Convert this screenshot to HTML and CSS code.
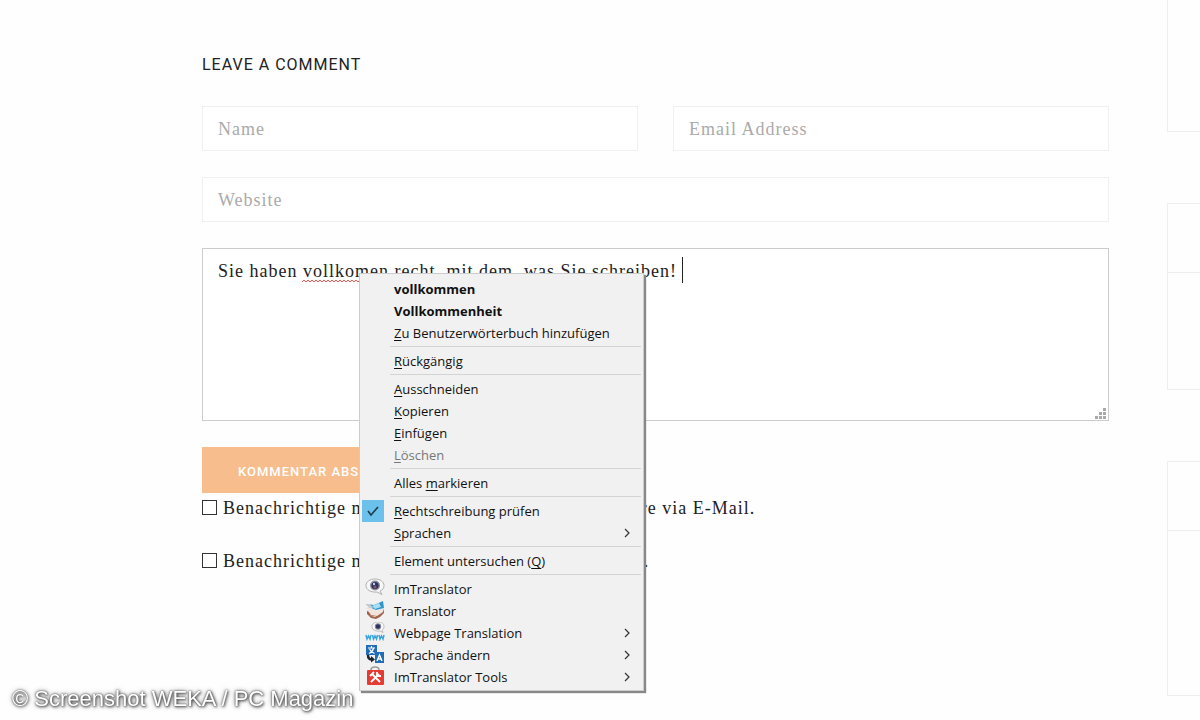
FILE: index.html
```
<!DOCTYPE html>
<html lang="de">
<head>
  <meta charset="UTF-8" />
  <meta name="viewport" content="width=device-width, initial-scale=1.0" />
  <title>Leave a comment</title>
  <link rel="stylesheet" href="styles.css">
</head>
<body>
  <div class="page">
    <main class="comments">
      <h3 class="comments-title">Leave a comment</h3>

      <form class="comment-form">
        <div class="field-row">
          <input class="field" type="text" name="author" placeholder="Name" aria-label="Name">
          <input class="field" type="email" name="email" placeholder="Email Address" aria-label="Email Address">
        </div>
        <input class="field" type="url" name="url" placeholder="Website" aria-label="Website">

        <div class="message">
          <textarea class="field message-text" name="comment" aria-label="Kommentar" spellcheck="false">Sie haben vollkomen recht, mit dem, was Sie schreiben!</textarea>
          <svg class="spelling" viewBox="0 0 84 4" aria-hidden="true">
            <path d="M0 3l2-2 2 2 2-2 2 2 2-2 2 2 2-2 2 2 2-2 2 2 2-2 2 2 2-2 2 2 2-2 2 2 2-2 2 2 2-2 2 2 2-2 2 2 2-2 2 2 2-2 2 2 2-2 2 2 2-2 2 2 2-2 2 2 2-2 2 2 2-2 2 2 2-2 2 2 2-2 2 2 2-2 2 2" fill="none" stroke="#ea5a50"/>
          </svg>
          <span class="caret"></span>
          <svg class="grip" viewBox="0 0 11 11" aria-hidden="true">
            <path d="M8 0h3v3h-3zM4 4h3v3h-3zM8 4h3v3h-3zM0 8h3v3h-3zM4 8h3v3h-3zM8 8h3v3h-3z" fill="#aaa"/>
          </svg>
        </div>

        <button class="submit" type="submit">Kommentar abschicken</button>

        <div class="subscribe">
          <label><input type="checkbox" name="subscribe_comments"> Benachrichtige mich über nachfolgende Kommentare via E-Mail.</label>
          <label><input type="checkbox" name="subscribe_blog"> Benachrichtige mich über neue Beiträge via E-Mail.</label>
        </div>
      </form>

      <!-- context menu -->
      <div class="menu" role="menu">
        <button class="item bold" role="menuitem">vollkommen</button>
        <button class="item bold" role="menuitem">Vollkommenheit</button>
        <button class="item" role="menuitem"><span><u>Z</u>u Benutzerwörterbuch hinzufügen</span></button>
        <hr>
        <button class="item" role="menuitem"><span><u>R</u>ückgängig</span></button>
        <hr>
        <button class="item" role="menuitem"><span><u>A</u>usschneiden</span></button>
        <button class="item" role="menuitem"><span><u>K</u>opieren</span></button>
        <button class="item" role="menuitem"><span><u>E</u>infügen</span></button>
        <button class="item" role="menuitem" disabled><span><u>L</u>öschen</span></button>
        <hr>
        <button class="item" role="menuitem"><span>Alles <u>m</u>arkieren</span></button>
        <hr>
        <button class="item" role="menuitemcheckbox" aria-checked="true">
          <svg class="check" viewBox="0 0 22 22"><path d="M6 11l3 4 7-8" fill="none" stroke="#1d3a4a" stroke-width="1.6"/></svg>
          <span><u>R</u>echtschreibung prüfen</span>
        </button>
        <button class="item" role="menuitem">
          <span><u>S</u>prachen</span>
          <svg class="arrow" viewBox="0 0 6 10"><path d="M1 1l4 4-4 4" fill="none" stroke="#333" stroke-width="1.2"/></svg>
        </button>
        <hr>
        <button class="item" role="menuitem"><span>Element untersuchen (<u>Q</u>)</span></button>
        <hr>
        <button class="item" role="menuitem">
          <svg class="icon" viewBox="0 0 20 20">
            <path d="M10 1c5 0 9 2.600 9 6.500 0 2.600-1.500 4.500-4 5.600l2 3.400-5-2.500c-6 .5-11-2-11-6.500C1 3.600 5 1 10 1z" fill="#f8f8f8" stroke="#b0b0b0"/>
            <circle cx="10" cy="7.500" r="5" fill="#8b8c98"/>
            <circle cx="10" cy="7.500" r="3.600" fill="#2d3260"/>
            <circle cx="10" cy="9" r="1.500" fill="#8a5260"/>
            <circle cx="9" cy="6" r="1.200" fill="#c5cbe8"/>
          </svg>
          <span>ImTranslator</span>
        </button>
        <button class="item" role="menuitem">
          <svg class="icon" viewBox="0 0 20 20">
            <path d="M2 11l9 2 8-4v4l-4 4-4 2-5-1-4-4z" fill="#a2634c"/>
            <path d="M1 8l4-1 7 4 7-3-1 4-6 4-6-1z" fill="#f0e4dc"/>
            <path d="M3 15l5 1 5-1-3 2z" fill="#e9cfc0"/>
            <path d="M1 4l8 1 9-4 1 7-8 2-7-3z" fill="#2f97cb"/>
            <path d="M7 6l7-3 2 4-6 2z" fill="#a7def2"/>
            <path d="M1 4l4 0 3 4-4 0z" fill="#c4ced2"/>
          </svg>
          <span>Translator</span>
        </button>
        <button class="item" role="menuitem">
          <svg class="icon" viewBox="0 0 20 20">
            <path d="M13 0c4 0 6 2 6 4.500 0 2-1 3-2 3.700l1 2.300-3-1.500c-5 .5-8-1.500-8-4.500C7 2 9 0 13 0z" fill="#f8f8f8" stroke="#bbb"/>
            <circle cx="13" cy="4.500" r="3.200" fill="#8b8c98"/>
            <circle cx="13" cy="4.500" r="2.200" fill="#2d3260"/>
            <path d="M1 13l1 4 1.500-3 1.500 3 1-4M7.500 13l1 4 1.500-3 1.500 3 1-4M14 13l1 4 1.500-3 1.500 3 1-4" fill="none" stroke="#3aa5dc" stroke-width="1.500"/>
          </svg>
          <span>Webpage Translation</span>
          <svg class="arrow" viewBox="0 0 6 10"><path d="M1 1l4 4-4 4" fill="none" stroke="#333" stroke-width="1.2"/></svg>
        </button>
        <button class="item" role="menuitem">
          <svg class="icon" viewBox="0 0 20 20">
            <path d="M1 1h11v10H1zM10 8h9v11h-9z" fill="#1f6cb8"/>
            <path d="M3 4h7M6.500 2v2M4 9.500c2-1 4-3 4.500-5M4.500 5c1 2 2 3.500 5 4.500" fill="none" stroke="#fff" stroke-width="1.200"/>
            <path d="M12 17l2.500-6 2.500 6M13 15h3" fill="none" stroke="#fff" stroke-width="1.400"/>
            <path d="M3 11c0 4 2 4.500 4 4.500" fill="none" stroke="#1c2430" stroke-width="2.500"/>
            <path d="M6 12l4 3.500-4 3z" fill="#1c2430"/>
          </svg>
          <span>Sprache ändern</span>
          <svg class="arrow" viewBox="0 0 6 10"><path d="M1 1l4 4-4 4" fill="none" stroke="#333" stroke-width="1.2"/></svg>
        </button>
        <button class="item" role="menuitem">
          <svg class="icon" viewBox="0 0 20 20">
            <path d="M6 4c0-4 8-4 8 0" fill="none" stroke="#999" stroke-width="1.500"/>
            <rect x="2" y="4" width="17" height="15" rx="1" fill="#e63b32"/>
            <path d="M7 8l8 8M14 8l-8 8" stroke="#fff" stroke-width="1.800"/>
            <path d="M5 10l4-4M12 6v4h4" fill="none" stroke="#fff" stroke-width="1.800"/>
          </svg>
          <span>ImTranslator Tools</span>
          <svg class="arrow" viewBox="0 0 6 10"><path d="M1 1l4 4-4 4" fill="none" stroke="#333" stroke-width="1.2"/></svg>
        </button>
      </div>
    </main>

    <aside class="sidebar">
      <div class="widget widget-first"></div>
      <div class="widget widget-small"><div class="widget-head"></div></div>
      <div class="widget widget-large"><div class="widget-head"></div></div>
    </aside>
  </div>

  <p class="credit">© Screenshot WEKA / PC Magazin</p>
</body>
</html>
```
FILE: styles.css
```
* {
  box-sizing: border-box;
}
body {
  margin: 0;
  background: #fefefe;
  color: #222;
  font-family: "Liberation Serif", serif;
  font-size: 18px;
  letter-spacing: 1px;
}
.page {
  display: grid;
  grid-template-columns: 1fr 33px;
  gap: 58px;
  padding-left: 202px;
}
.comments {
  position: relative;
  padding-top: 54px;
}
.comments-title {
  margin: 0 0 31px;
  font: 400 16px/21px Roboto, sans-serif;
  letter-spacing: 1px;
  text-transform: uppercase;
}

/* form */
.comment-form {
  display: flex;
  flex-direction: column;
  gap: 26px;
}
.field-row {
  display: grid;
  grid-template-columns: 1fr 1fr;
  gap: 35px;
}
.field {
  display: block;
  width: 100%;
  height: 45px;
  padding: 2px 15px 0;
  border: 1px solid #f0f0f0;
  background: #fff;
  color: #222;
  font: inherit;
  letter-spacing: 1px;
}
.field::placeholder {
  color: #aaa;
  opacity: 1;
}
.message {
  position: relative;
}
.message-text {
  height: 173px;
  padding: 10px 15px;
  border-color: #ccc;
  line-height: 24px;
  resize: none;
}
.spelling {
  position: absolute;
  top: 31px;
  left: 100px;
  width: 84px;
  height: 4px;
}
.caret {
  position: absolute;
  top: 9px;
  left: 480px;
  width: 1px;
  height: 26px;
  background: #222;
}
.grip {
  position: absolute;
  right: 3px;
  bottom: 2px;
  width: 11px;
  height: 11px;
}
.submit {
  align-self: flex-start;
  height: 46px;
  padding: 2px 36px 0;
  border: 0;
  background: #f8bd8d;
  color: #fff;
  font: 500 13px Roboto, sans-serif;
  letter-spacing: 1px;
  text-transform: uppercase;
}
.subscribe {
  display: flex;
  flex-direction: column;
  gap: 29px;
  margin-top: -23px;
}
.subscribe label {
  display: flex;
  align-items: center;
  gap: 6px;
  height: 24px;
}
.subscribe input {
  appearance: none;
  width: 15px;
  height: 15px;
  margin: 0 0 2px;
  border: 1px solid #333;
  background: #fff;
}

/* context menu */
.menu {
  position: absolute;
  top: 273px;
  left: 157px;
  width: 285px;
  padding: 4px 2px 2px;
  border: 1px solid #ccc;
  background: #f1f1f1;
  box-shadow: 2px 2px 1px #888;
}
.item {
  display: flex;
  align-items: center;
  width: 100%;
  height: 22px;
  padding: 0 11px 0 32px;
  border: 0;
  background: none;
  color: #111;
  font: 13px/22px "Open Sans", sans-serif;
  text-align: left;
  white-space: pre;
}
.item:disabled {
  color: #777;
}
.item.bold {
  font-weight: 700;
}
.item u {
  text-underline-offset: 2px;
}
.menu hr {
  height: 1px;
  margin: 2px 0 3px 28px;
  border: 0;
  background: #d4d4d4;
}
.check {
  flex: none;
  width: 22px;
  height: 22px;
  margin: 0 10px 0 -32px;
  background: #6cc0ec;
}
.icon {
  flex: none;
  width: 20px;
  height: 20px;
  margin: 0 9px 2px -29px;
}
.arrow {
  width: 6px;
  height: 10px;
  margin-left: auto;
}

/* sidebar boxes */
.sidebar {
  display: flex;
  flex-direction: column;
  gap: 71px;
}
.widget {
  border: 1px solid #eee;
  border-right: 0;
}
.widget-first {
  height: 132px;
  border-top: 0;
}
.widget-small {
  height: 187px;
}
.widget-large {
  height: 235px;
}
.widget-head {
  height: 69px;
  border-bottom: 1px solid #eee;
}

.credit {
  position: fixed;
  left: 12px;
  bottom: 8px;
  margin: 0;
  color: #fff;
  font: 22px/27px "Liberation Sans", sans-serif;
  letter-spacing: 0;
  text-shadow: 0 0 2px #444, 1px 1px 3px #444, 0 0 5px #777;
}
```
